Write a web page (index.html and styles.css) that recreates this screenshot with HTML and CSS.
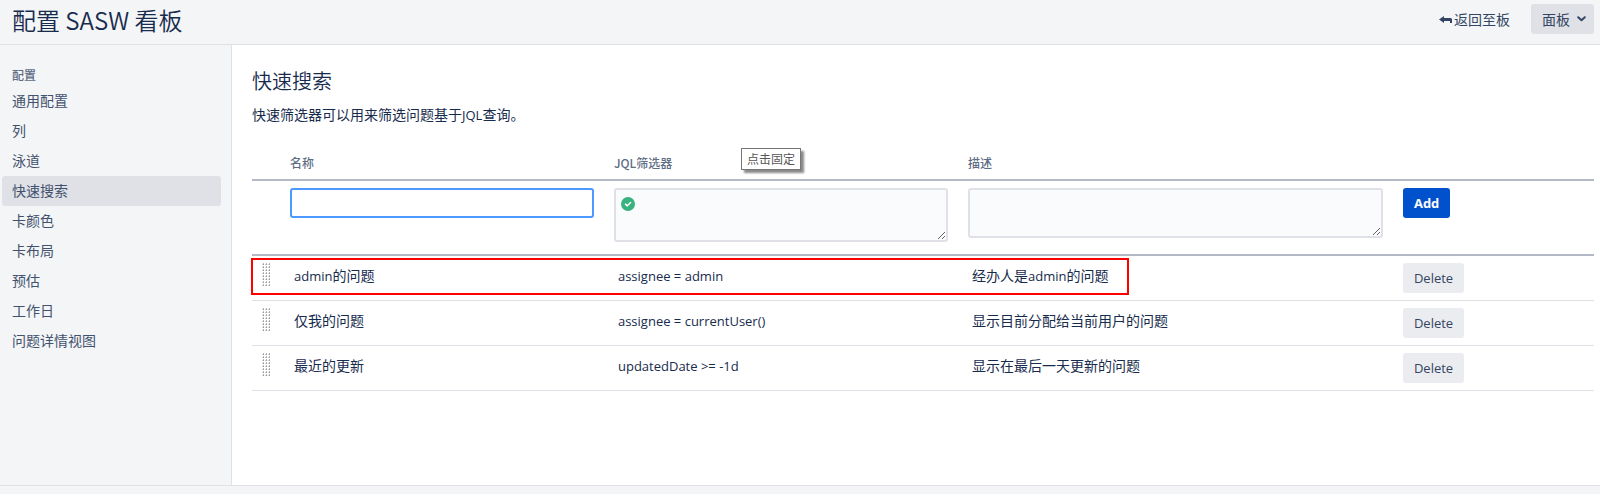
FILE: index.html
```html
<!DOCTYPE html>
<html lang="zh-CN">
<head>
<meta charset="utf-8">
<title>配置 SASW 看板</title>
<link rel="stylesheet" href="styles.css">
</head>
<body>
<svg class="defs" width="0" height="0" aria-hidden="true">
  <defs>
    <pattern id="dots" width="3" height="3" patternUnits="userSpaceOnUse">
      <rect x="1" width="1" height="1" fill="#b4b4b4"/>
      <rect y="1" width="1" height="1" fill="#d0d0d0"/>
      <rect x="1" y="1" width="1" height="1" fill="#a0a0a0"/>
    </pattern>
  </defs>
</svg>
<header class="page-header">
  <h1 class="page-title">配置 SASW 看板</h1>
  <div class="page-actions">
    <a class="back-link" href="#"><svg width="14" height="10" viewBox="0 0 14 10" aria-hidden="true"><path d="M0 5.500 5 2v2h6.500q1.500 0 1.500 1.500V9h-2V7H5v2z" fill="#344563"/></svg>返回至板</a>
    <button class="btn board-btn" type="button">面板<svg width="9" height="6" viewBox="0 0 9 6" aria-hidden="true"><path d="M1.200 1.200 4.500 4.200 7.800 1.200" fill="none" stroke="#344563" stroke-width="2" stroke-linecap="round" stroke-linejoin="round"/></svg></button>
  </div>
</header>
<div class="layout">
  <nav class="sidebar" aria-label="配置">
    <h2 class="nav-heading">配置</h2>
    <a class="nav-item" href="#">通用配置</a>
    <a class="nav-item" href="#">列</a>
    <a class="nav-item" href="#">泳道</a>
    <a class="nav-item selected" href="#" aria-current="page">快速搜索</a>
    <a class="nav-item" href="#">卡颜色</a>
    <a class="nav-item" href="#">卡布局</a>
    <a class="nav-item" href="#">预估</a>
    <a class="nav-item" href="#">工作日</a>
    <a class="nav-item" href="#">问题详情视图</a>
  </nav>
  <main class="content">
    <h2 class="section-title">快速搜索</h2>
    <p class="intro">快速筛选器可以用来筛选问题基于<span class="latin">JQL</span>查询。</p>
    <table class="filters">
      <colgroup><col class="col-grip"><col class="col-name"><col class="col-jql"><col class="col-desc"><col></colgroup>
      <thead>
        <tr>
          <th></th>
          <th><label for="name">名称</label></th>
          <th class="jql-head"><label for="jql">JQL筛选器</label><span class="tooltip" role="tooltip">点击固定</span></th>
          <th><label for="desc">描述</label></th>
          <th></th>
        </tr>
        <tr class="add-row">
          <td></td>
          <td><input class="field name-field" id="name" type="text"></td>
          <td><div class="jql-wrap"><textarea class="field jql-field" id="jql"></textarea><svg class="valid-icon" width="14" height="14" viewBox="0 0 14 14" aria-hidden="true"><circle cx="7" cy="7" r="7" fill="#36b37e"/><path d="M4.500 7.200 6.300 8.800 9.600 5.500" fill="none" stroke="#fff" stroke-width="1.600" stroke-linecap="round" stroke-linejoin="round"/></svg></div></td>
          <td><textarea class="field desc-field" id="desc"></textarea></td>
          <td><button class="btn primary latin" type="button">Add</button></td>
        </tr>
      </thead>
      <tbody>
        <tr class="marked">
          <td class="grip"><svg width="9" height="24" aria-hidden="true"><rect width="9" height="24" fill="url(#dots)"/></svg><span class="outline"></span></td>
          <td><div class="value"><span class="latin">admin</span>的问题</div></td>
          <td><div class="value"><span class="latin">assignee = admin</span></div></td>
          <td><div class="value">经办人是<span class="latin">admin</span>的问题</div></td>
          <td><button class="btn latin" type="button">Delete</button></td>
        </tr>
        <tr>
          <td class="grip"><svg width="9" height="24" aria-hidden="true"><rect width="9" height="24" fill="url(#dots)"/></svg></td>
          <td><div class="value">仅我的问题</div></td>
          <td><div class="value"><span class="latin">assignee = currentUser()</span></div></td>
          <td><div class="value">显示目前分配给当前用户的问题</div></td>
          <td><button class="btn latin" type="button">Delete</button></td>
        </tr>
        <tr>
          <td class="grip"><svg width="9" height="24" aria-hidden="true"><rect width="9" height="24" fill="url(#dots)"/></svg></td>
          <td><div class="value">最近的更新</div></td>
          <td><div class="value"><span class="latin">updatedDate &gt;= -1d</span></div></td>
          <td><div class="value">显示在最后一天更新的问题</div></td>
          <td><button class="btn latin" type="button">Delete</button></td>
        </tr>
      </tbody>
    </table>
  </main>
</div>
<footer class="page-footer"></footer>
</body>
</html>
```
FILE: styles.css
```css
* { box-sizing: border-box; }

body {
  margin: 0;
  min-height: 100vh;
  display: flex;
  flex-direction: column;
  background: #f4f5f7;
  color: #172b4d;
  font: 14px/20px "Noto Sans CJK SC", sans-serif;
}

h1, h2, p { margin: 0; }
a { text-decoration: none; }
button, input, textarea { font: inherit; color: inherit; }
.defs { position: absolute; }
.latin { font-family: "Open Sans", "Noto Sans CJK SC", sans-serif; font-size: 13px; }

.page-header {
  display: flex;
  align-items: center;
  justify-content: space-between;
  padding: 4px 6px 10px 12px;
  border-bottom: 1px solid #dfe1e6;
}
.page-title { padding-top: 2px; font-size: 24px; line-height: 28px; font-weight: 350; }
.page-actions { display: flex; align-items: center; gap: 21px; }
.back-link { display: flex; align-items: center; gap: 1px; line-height: 18px; color: #344563; }

.btn {
  height: 30px;
  padding: 0 11px 1px;
  border: 0;
  border-radius: 3px;
  background: #ebecf0;
  color: #344563;
}
.board-btn { display: flex; align-items: center; gap: 7px; padding: 0 8px 1px 11px; background: #dfe1e6; }
.primary { background: #0052cc; color: #fff; font-weight: 700; }

.layout { flex: 1; display: flex; }
.sidebar {
  width: 232px;
  flex: none;
  padding: 20px 10px 20px 2px;
  border-right: 1px solid #dfe1e6;
}
.nav-heading { padding: 0 10px 1px; font-size: 12px; line-height: 20px; font-weight: 500; color: #5e6c84; }
.nav-item {
  display: block;
  padding: 4px 10px 6px;
  border-radius: 3px;
  color: #42526e;
}
.selected { background: #dfe1e6; }

.content { flex: 1; min-width: 0; padding: 24px 6px 20px 20px; background: #fff; }
.section-title { font-size: 20px; line-height: 24px; font-weight: 350; }
.intro { margin-top: 11px; }

.filters {
  width: 100%;
  margin-top: 21px;
  table-layout: fixed;
  border-collapse: separate;
  border-spacing: 0;
}
.col-grip { width: 28px; }
.col-name { width: 24.14%; }
.col-jql { width: 26.38%; }
.col-desc { width: 32.41%; }

th {
  padding: 7px 10px 6px;
  border-bottom: 2px solid #b3bac5;
  font-size: 12px;
  line-height: 20px;
  font-weight: 500;
  text-align: left;
  color: #5e6c84;
}
td { padding: 7px 10px; vertical-align: top; border-bottom: 1px solid #dfe1e6; }
.add-row td { padding-bottom: 12px; border-bottom: 2px solid #b3bac5; }

.field {
  display: block;
  width: 100%;
  margin: 0;
  padding: 4px;
  border: 2px solid #dfe1e6;
  border-radius: 3px;
  background: #fafbfc;
  outline: 0;
}
.name-field { height: 30px; background: #fff; border-color: #4c9aff; }
.jql-field { height: 54px; padding-left: 24px; }
.desc-field { height: 50px; }
.jql-wrap { position: relative; }
.valid-icon { position: absolute; left: 7px; top: 9px; }

.value { padding: 2px 4px; }
.grip svg { display: block; }

.jql-head { position: relative; }
.tooltip {
  position: absolute;
  left: 137px;
  top: 2px;
  padding: 0 5px;
  border: 1px solid #767676;
  background: #fff;
  color: #575757;
  font-weight: 400;
  box-shadow: 3px 3px 2px #8a8a8a;
}

.marked { position: relative; }
.outline {
  position: absolute;
  left: -1px;
  top: 2px;
  bottom: 6px;
  width: 65.4%;
  border: 2px solid #f00;
  pointer-events: none;
}

.page-footer { height: 9px; border-top: 1px solid #dfe1e6; }
```
